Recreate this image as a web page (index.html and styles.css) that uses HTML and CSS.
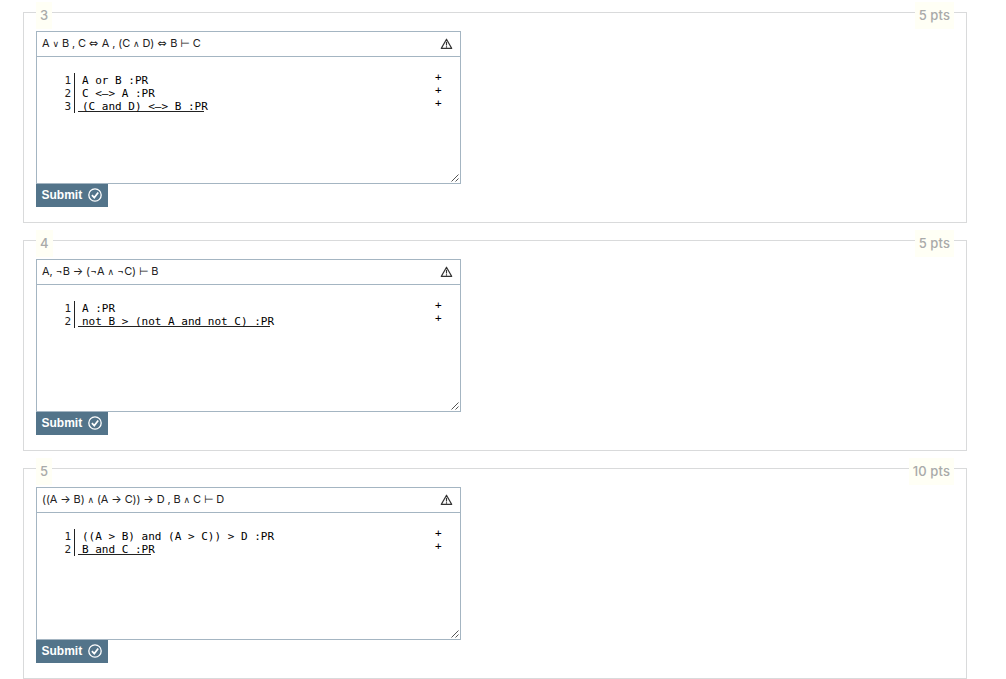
FILE: index.html
```
<!DOCTYPE html>
<html lang="en">
<head>
    <meta charset="UTF-8">
    <title>Proof Exercises</title>
    <link rel="stylesheet" href="styles.css">
</head>
<body>

<svg class="defs">
    <symbol id="warning" viewBox="0 0 12 12">
        <path d="M6 1.2 L11.2 10.4 H0.8 Z M6 3.8 V7.4 M6 8.2 V9.4" fill="none" stroke="#333" stroke-width="1.15" stroke-linejoin="round"/>
    </symbol>
    <symbol id="check" viewBox="0 0 14 14">
        <circle cx="7" cy="7" r="6.2" fill="none" stroke="#fff" stroke-width="1.3"/>
        <path d="M3.9 7.1 L6.3 9.6 L10.2 4.6" fill="none" stroke="#fff" stroke-width="1.7"/>
    </symbol>
    <symbol id="grip" viewBox="0 0 8 8">
        <path d="M0.5 7.5 L7.5 0.5 M4.5 7.5 L7.5 4.5" stroke="#555" stroke-width="1"/>
    </symbol>
</svg>

<div class="exercise">
    <span class="number">3</span>
    <span class="points">5 pts</span>
    <div class="proof">
        <div class="goal"><span class="sequent">A <i>∨</i> B , C <b>⇔</b> A , (C <i>∧</i> D) <b>⇔</b> B ⊢ C</span><svg class="warning"><use href="#warning"/></svg></div>
        <div class="editor">
            <div class="numbers">1<br>2<br>3</div>
            <div class="lines">
                <div><span>A or B :PR</span></div>
                <div><span>C &lt;–&gt; A :PR</span></div>
                <div class="last"><span>(C and D) &lt;–&gt; B :PR</span></div>
            </div>
            <div class="feedback">+<br>+<br>+</div>
        </div>
        <svg class="grip"><use href="#grip"/></svg>
    </div>
    <button>Submit <svg><use href="#check"/></svg></button>
</div>

<div class="exercise">
    <span class="number">4</span>
    <span class="points">5 pts</span>
    <div class="proof">
        <div class="goal"><span class="sequent">A, ¬B → (¬A <i>∧</i> ¬C) ⊢ B</span><svg class="warning"><use href="#warning"/></svg></div>
        <div class="editor">
            <div class="numbers">1<br>2</div>
            <div class="lines">
                <div><span>A :PR</span></div>
                <div class="last"><span>not B &gt; (not A and not C) :PR</span></div>
            </div>
            <div class="feedback">+<br>+</div>
        </div>
        <svg class="grip"><use href="#grip"/></svg>
    </div>
    <button>Submit <svg><use href="#check"/></svg></button>
</div>

<div class="exercise">
    <span class="number">5</span>
    <span class="points">10 pts</span>
    <div class="proof">
        <div class="goal"><span class="sequent">((A → B) <i>∧</i> (A → C)) → D , B <i>∧</i> C ⊢ D</span><svg class="warning"><use href="#warning"/></svg></div>
        <div class="editor">
            <div class="numbers">1<br>2</div>
            <div class="lines">
                <div><span>((A &gt; B) and (A &gt; C)) &gt; D :PR</span></div>
                <div class="last"><span>B and C :PR</span></div>
            </div>
            <div class="feedback">+<br>+</div>
        </div>
        <svg class="grip"><use href="#grip"/></svg>
    </div>
    <button>Submit <svg><use href="#check"/></svg></button>
</div>

</body>
</html>
```
FILE: styles.css
```
* {
    box-sizing: border-box;
}
body {
    margin: 0;
    padding: 12px 39px 0 23px;
    background-color: #fff;
    font-family: Inter, "DejaVu Sans", sans-serif;
    overflow: hidden;
}
.defs {
    display: none;
}
.exercise {
    position: relative;
    height: 211px;
    margin-bottom: 17px;
    padding: 18px 12px 0;
    border: 1px solid #d9dadb;
}
.number, .points {
    position: absolute;
    top: -11px;
    height: 27px;
    padding: 0 4px;
    background-color: #fffff5;
    color: #a9aaa9;
    font-size: 13px;
    font-weight: 500;
    line-height: 27px;
}
.number {
    left: 12px;
}
.points {
    right: 12px;
    letter-spacing: 0.1px;
}
.proof {
    position: relative;
    width: 425px;
    height: 153px;
    border: 1px solid #a4b5c2;
}
.goal {
    display: flex;
    justify-content: space-between;
    align-items: center;
    height: 25px;
    padding: 0 7px 0 5px;
    border-bottom: 1px solid #a4b5c2;
    color: #222;
    font-size: 11px;
    white-space: nowrap;
}
.sequent {
    padding-bottom: 1px;
    letter-spacing: -0.12px;
    line-height: 14px;
}
.sequent i {
    font-style: normal;
    font-size: 9px;
}
.sequent b {
    display: inline-block;
    width: 10px;
    font-family: "DejaVu Sans", sans-serif;
    font-size: 11px;
    font-weight: normal;
    line-height: 10px;
}
.warning {
    width: 13px;
    height: 12px;
}
.editor {
    display: flex;
    padding-top: 16px;
    font-family: "DejaVu Sans Mono", monospace;
    font-size: 11px;
    line-height: 13px;
    color: #000;
}
.numbers {
    width: 38px;
    padding: 1px 3px 0 0;
    border-right: 1px solid #222;
    text-align: right;
    color: #222;
}
.lines {
    flex: 1;
    padding: 1px 0 0 3px;
}
.lines div {
    width: max-content;
    height: 13px;
    white-space: nowrap;
}
.lines span {
    margin: 0 -4px 0 4px;
}
.lines .last {
    height: 12px;
    border-bottom: 1px solid #222;
}
.feedback {
    width: 25px;
    margin-top: -2px;
}
.grip {
    position: absolute;
    right: 1px;
    bottom: 1px;
    width: 8px;
    height: 8px;
}
button {
    display: flex;
    align-items: center;
    justify-content: space-between;
    width: 72px;
    height: 23px;
    padding: 0 6px 1px 5.5px;
    border: none;
    background-color: #53748a;
    color: #fff;
    font-family: "Liberation Sans", Arial, sans-serif;
    font-size: 12px;
    font-weight: bold;
}
button svg {
    width: 14px;
    height: 14px;
    margin-top: -1px;
}
```
